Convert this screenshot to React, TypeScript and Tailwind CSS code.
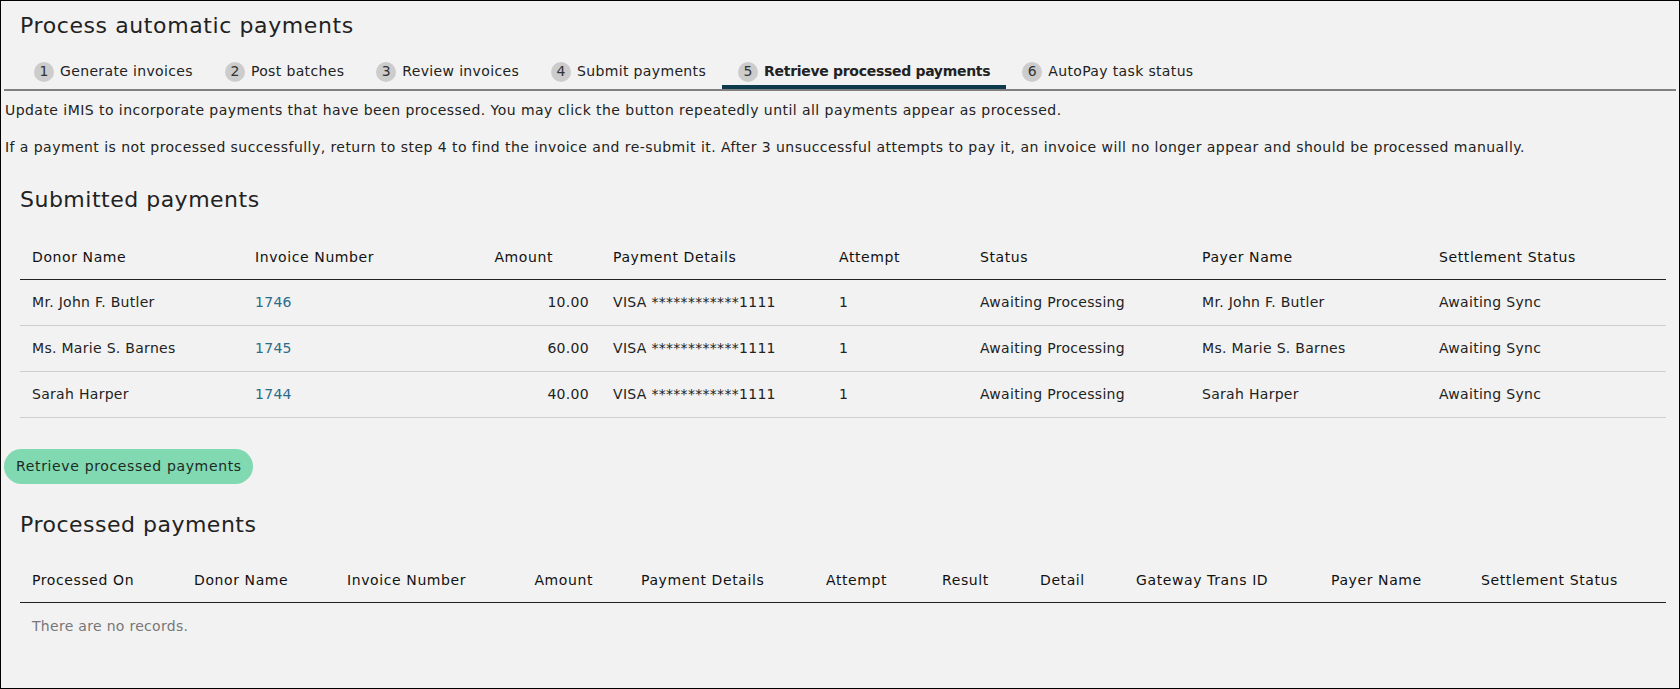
import React from 'react';

const tabs = [
  { n: 1, label: 'Generate invoices' },
  { n: 2, label: 'Post batches' },
  { n: 3, label: 'Review invoices' },
  { n: 4, label: 'Submit payments' },
  { n: 5, label: 'Retrieve processed payments', active: true },
  { n: 6, label: 'AutoPay task status' },
];

const submitted = [
  { donor: 'Mr. John F. Butler', invoice: '1746', amount: '10.00', payer: 'Mr. John F. Butler' },
  { donor: 'Ms. Marie S. Barnes', invoice: '1745', amount: '60.00', payer: 'Ms. Marie S. Barnes' },
  { donor: 'Sarah Harper', invoice: '1744', amount: '40.00', payer: 'Sarah Harper' },
];

// column widths for the submitted payments table
const subCols = 'grid grid-cols-[223px_207px_151px_226px_141px_222px_237px_1fr]';
// column widths for the processed payments table
const procCols =
  'grid grid-cols-[162px_153px_145px_149px_185px_116px_98px_96px_195px_150px_1fr]';

function App() {
  return (
    <div
      className="w-[1680px] h-[689px] overflow-hidden border border-black bg-[#f2f2f2] text-[#222] tracking-[0.3px]"
      style={{ fontFamily: '"DejaVu Sans", "Open Sans", sans-serif' }}
    >
      <h1 className="ml-[19px] pt-[8px] text-[22px] leading-[33px] tracking-[0.6px]">Process automatic payments</h1>

      {/* Step tabs */}
      <div className="mx-[3px] mt-[13px] flex border-b-2 border-[#808080] pl-[14px]">
        {tabs.map((t) => (
          <div
            key={t.n}
            className={`flex h-[34px] items-center gap-[6px] border-b-4 px-4 pt-[3px] text-[14px] ${
              t.active ? 'border-[#0e3a4c] font-semibold tracking-[-0.3px]' : 'border-transparent tracking-[0.35px]'
            }`}
          >
            <span className="flex h-5 w-5 items-center justify-center rounded-full bg-[#cccccc] text-[14px] font-normal tracking-normal text-[#333]">
              {t.n}
            </span>
            {t.label}
          </div>
        ))}
      </div>

      <p className="mt-[9px] ml-[4px] text-[14px] leading-[21px] tracking-[0.45px]">
        Update iMIS to incorporate payments that have been processed. You may click the button repeatedly until all
        payments appear as processed.
      </p>
      <p className="mt-[16px] ml-[4px] text-[14px] leading-[21px] tracking-[0.45px]">
        If a payment is not processed successfully, return to step 4 to find the invoice and re-submit it. After 3
        unsuccessful attempts to pay it, an invoice will no longer appear and should be processed manually.
      </p>

      <h2 className="mt-[26px] ml-[19px] text-[22px] leading-[32px] tracking-[0.5px]">Submitted payments</h2>

      {/* Submitted payments table */}
      <div className="mt-[19px] ml-[19px] w-[1646px] text-[14px]">
        <div className={`${subCols} h-[45px] items-center border-b border-[#222] tracking-[0.6px] text-[#111]`}>
          <div className="pl-3">Donor Name</div>
          <div className="pl-3">Invoice Number</div>
          <div className="pr-[48px] text-right">Amount</div>
          <div className="pl-3">Payment Details</div>
          <div className="pl-3">Attempt</div>
          <div className="pl-3">Status</div>
          <div className="pl-3">Payer Name</div>
          <div className="pl-3">Settlement Status</div>
        </div>
        {submitted.map((r) => (
          <div key={r.invoice} className={`${subCols} h-[46px] items-center border-b border-[#cfcfcf]`}>
            <div className="pl-3">{r.donor}</div>
            <div className="pl-3 text-[#2b6c8a]">{r.invoice}</div>
            <div className="pr-3 text-right">{r.amount}</div>
            <div className="pl-3">VISA ************1111</div>
            <div className="pl-3">1</div>
            <div className="pl-3">Awaiting Processing</div>
            <div className="pl-3">{r.payer}</div>
            <div className="pl-3">Awaiting Sync</div>
          </div>
        ))}
      </div>

      <button className="mt-[31px] ml-[3px] flex h-[35px] w-[249px] items-center rounded-full bg-[#80d9b1] pl-[12px] text-[14px] tracking-[0.65px] text-[#1e2a24]">
        Retrieve processed payments
      </button>

      <h2 className="mt-[25px] ml-[19px] text-[22px] leading-[32px] tracking-[0.5px]">Processed payments</h2>

      {/* Processed payments table */}
      <div className="mt-[17px] ml-[19px] w-[1646px] text-[14px]">
        <div className={`${procCols} h-[45px] items-center border-b border-[#222] tracking-[0.6px] text-[#111]`}>
          <div className="pl-3">Processed On</div>
          <div className="pl-3">Donor Name</div>
          <div className="pl-3">Invoice Number</div>
          <div className="pr-[36px] text-right">Amount</div>
          <div className="pl-3">Payment Details</div>
          <div className="pl-3">Attempt</div>
          <div className="pl-3">Result</div>
          <div className="pl-3">Detail</div>
          <div className="pl-3">Gateway Trans ID</div>
          <div className="pl-3">Payer Name</div>
          <div className="pl-3">Settlement Status</div>
        </div>
        <div className="pt-[13px] pl-3 leading-[21px] text-[#777]">There are no records.</div>
      </div>
    </div>
  );
}

export default App;
